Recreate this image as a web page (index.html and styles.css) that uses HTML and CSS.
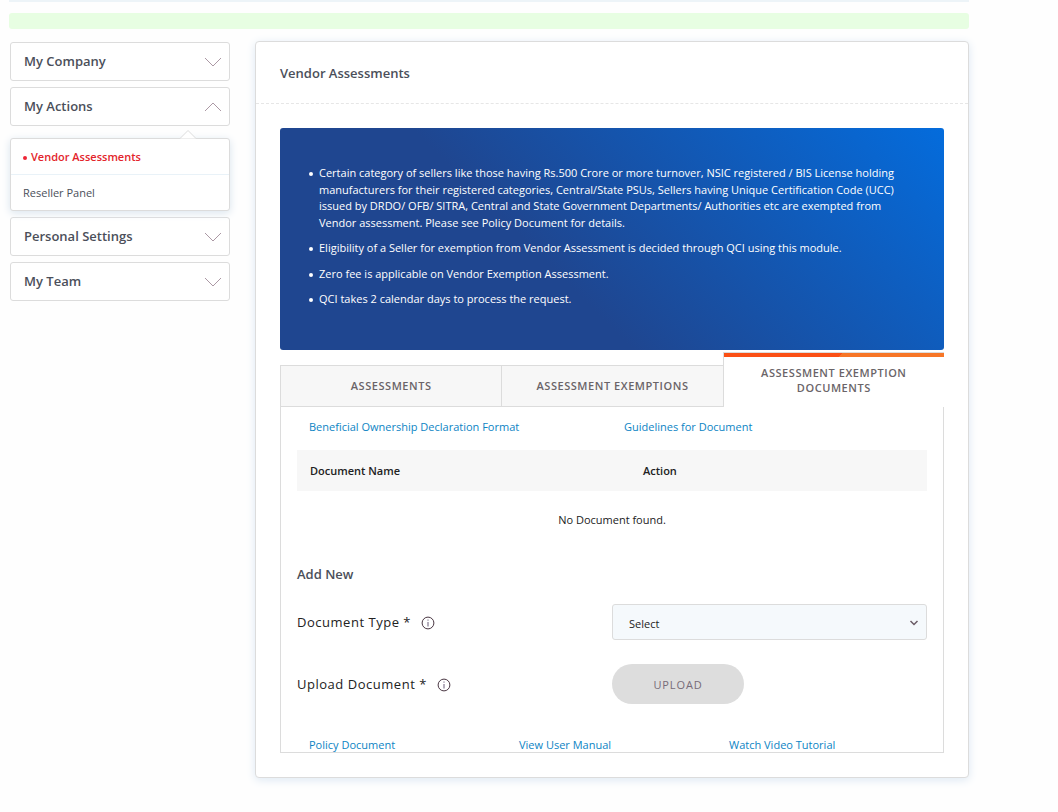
FILE: index.html
```html
<!DOCTYPE html>
<html lang="en">
<head>
<meta charset="utf-8">
<title>Vendor Assessments</title>
<link rel="stylesheet" href="styles.css">
</head>
<body>
<div class="page">
  <div class="notice" role="status"></div>
  <div class="columns">
    <nav class="sidebar" aria-label="Account">
      <button class="menu-toggle" type="button" aria-expanded="false">My Company
        <svg class="chevron" viewBox="0 0 18 10" aria-hidden="true"><path d="M1 1l8 8 8-8"/></svg>
      </button>
      <button class="menu-toggle" type="button" aria-expanded="true">My Actions
        <svg class="chevron" viewBox="0 0 18 10" aria-hidden="true"><path d="M1 9l8-8 8 8"/></svg>
      </button>
      <div class="submenu">
        <svg class="submenu-tip" viewBox="0 0 18 10" aria-hidden="true"><path d="M1 9.500l8-8 8 8"/></svg>
        <a class="submenu-link current" href="#vendor" aria-current="page">Vendor Assessments</a>
        <a class="submenu-link" href="#reseller">Reseller Panel</a>
      </div>
      <button class="menu-toggle" type="button" aria-expanded="false">Personal Settings
        <svg class="chevron" viewBox="0 0 18 10" aria-hidden="true"><path d="M1 1l8 8 8-8"/></svg>
      </button>
      <button class="menu-toggle" type="button" aria-expanded="false">My Team
        <svg class="chevron" viewBox="0 0 18 10" aria-hidden="true"><path d="M1 1l8 8 8-8"/></svg>
      </button>
    </nav>
    <main class="card">
      <h1 class="card-title">Vendor Assessments</h1>
      <div class="card-body">
        <ul class="banner">
          <li>Certain category of sellers like those having Rs.500 Crore or more turnover, NSIC registered / BIS License holding manufacturers for their registered categories, Central/State PSUs, Sellers having Unique Certification Code (UCC) issued by DRDO/ OFB/ SITRA, Central and State Government Departments/ Authorities etc are exempted from Vendor assessment. Please see Policy Document for details.</li>
          <li>Eligibility of a Seller for exemption from Vendor Assessment is decided through QCI using this module.</li>
          <li>Zero fee is applicable on Vendor Exemption Assessment.</li>
          <li>QCI takes 2 calendar days to process the request.</li>
        </ul>
        <div class="tabs" role="tablist">
          <button class="tab" type="button" role="tab" aria-selected="false">Assessments</button>
          <button class="tab" type="button" role="tab" aria-selected="false">Assessment Exemptions</button>
          <button class="tab active" type="button" role="tab" aria-selected="true">Assessment Exemption Documents</button>
        </div>
        <section class="panel" role="tabpanel">
          <div class="links two">
            <a href="#format">Beneficial Ownership Declaration Format</a>
            <a href="#guidelines">Guidelines for Document</a>
          </div>
          <table class="documents">
            <thead><tr><th>Document Name</th><th>Action</th></tr></thead>
            <tbody><tr><td colspan="2">No Document found.</td></tr></tbody>
          </table>
          <h2 class="form-title">Add New</h2>
          <form class="form">
            <div class="label-cell">
              <label for="doc-type">Document Type *</label>
              <svg class="info" viewBox="0 0 14 14" aria-hidden="true"><circle cx="7" cy="7" r="5.900"/><path class="info-mark" d="M7 6v4.500M7 3.500v1.200"/></svg>
            </div>
            <div class="field"><select class="select" id="doc-type"><option>Select</option></select>
              <svg class="select-arrow" viewBox="0 0 10 6" aria-hidden="true"><path d="M1.500 1l3.500 3.500L8.500 1"/></svg>
            </div>
            <div class="label-cell">
              <span id="upload-label">Upload Document *</span>
              <svg class="info" viewBox="0 0 14 14" aria-hidden="true"><circle cx="7" cy="7" r="5.900"/><path class="info-mark" d="M7 6v4.500M7 3.500v1.200"/></svg>
            </div>
            <div class="field"><button class="upload" type="button" aria-describedby="upload-label">Upload</button></div>
          </form>
          <div class="links three">
            <a href="#policy">Policy Document</a>
            <a href="#manual">View User Manual</a>
            <a href="#video">Watch Video Tutorial</a>
          </div>
        </section>
      </div>
    </main>
  </div>
</div>
</body>
</html>
```
FILE: styles.css
```css
* { box-sizing: border-box; }
body {
  margin: 0;
  font: 11px/1.5 "Open Sans", "Noto Sans", sans-serif;
  color: #222;
  background: #fefefe;
}
button, select { font: inherit; }
a { color: #0c84c4; text-decoration: none; }

.page {
  margin: 0 89px 0 9px;
  padding-bottom: 34px;
  border-top: 2px solid #edf4f8;
}
.notice {
  height: 16px;
  margin-top: 11px;
  border-radius: 3px;
  background: #e7fee2;
}
.columns {
  display: grid;
  grid-template-columns: 220px 1fr;
  gap: 25px;
  align-items: start;
  padding: 12px 0 0 1px;
}

.sidebar {
  display: flex;
  flex-direction: column;
  gap: 6px;
  padding-top: 1px;
}
.menu-toggle {
  display: flex;
  align-items: center;
  justify-content: space-between;
  height: 39px;
  padding: 0 7px 0 13px;
  border: 1px solid #dcdcdc;
  border-radius: 3px;
  background: #fff;
  color: #4b4f5a;
  font-size: 13px;
  font-weight: 600;
}
.chevron {
  width: 18px;
  height: 10px;
  fill: none;
  stroke: #ab98a4;
}
.submenu {
  position: relative;
  margin-top: 6px;
  border: 1px solid #dcdcdc;
  border-radius: 3px;
  background: #fff;
  box-shadow: 0 2px 8px #d9e4ee;
}
.submenu-tip {
  position: absolute;
  top: -10px;
  right: 32px;
  width: 18px;
  height: 10px;
  fill: #fff;
  stroke: #dcdcdc;
}
.submenu-link {
  display: flex;
  align-items: center;
  height: 35px;
  padding: 2px 12px 0;
  color: #4b4f5a;
}
.submenu-link + .submenu-link { height: 36px; border-top: 1px solid #e9f2f8; }
.submenu-link.current { color: #e3242b; font-weight: 600; }
.submenu-link.current::before {
  content: "";
  width: 4px;
  height: 4px;
  margin-right: 4px;
  border-radius: 50%;
  background: #ee2536;
}

.card {
  border: 1px solid #dcdcdc;
  border-radius: 4px;
  background: #fff;
  box-shadow: 0 2px 10px #dde8f3;
}
.card-title {
  margin: 0;
  padding: 21px 24px 20px;
  font-size: 13px;
  line-height: 20px;
  font-weight: 600;
  color: #4b4f5a;
  border-bottom: 1px dashed #e6e6e6;
}
.card-body { padding: 24px; }
.banner {
  display: flex;
  flex-direction: column;
  gap: 9px;
  min-height: 222px;
  margin: 0;
  padding: 37px 38px 37px 39px;
  border-radius: 3px;
  color: #fff;
  background: linear-gradient(45deg, #1f4690 40%, #046cdc);
}
.banner li { list-style: none; position: relative; }
.banner li::before {
  content: "";
  position: absolute;
  top: 7px;
  left: -10px;
  width: 4px;
  height: 4px;
  border-radius: 50%;
  background: #fff;
}

.tabs {
  display: grid;
  grid-template-columns: repeat(3, 1fr);
  align-items: end;
  margin-top: 2px;
}
.tab {
  height: 42px;
  padding: 0 24px 1px;
  border: 1px solid #dcdcdc;
  border-right-width: 0;
  background: #f7f7f7;
  color: #6a6468;
  font-weight: 600;
  line-height: 15px;
  letter-spacing: 0.05em;
  text-transform: uppercase;
}
.tab.active {
  position: relative;
  height: 55px;
  border-bottom: 0;
  background: #fff;
}
.tab.active::before {
  content: "";
  position: absolute;
  top: 0;
  left: 0;
  right: 0;
  height: 4px;
  background: linear-gradient(135deg, #fb5015 53%, #f77627 53%);
}
.panel {
  padding: 12px 16px 0;
  border: 1px solid #dcdcdc;
  border-top: 0;
}
.links { display: grid; line-height: 16px; }
.links a { padding: 0 12px; }
.links.two { grid-template-columns: 1fr 1fr; }
.links.three { grid-template-columns: repeat(3, 1fr); }
.documents {
  width: 100%;
  margin-top: 15px;
  border-collapse: collapse;
  table-layout: fixed;
}
.documents th {
  height: 41px;
  padding: 2px 13px 0;
  background: #f7f7f7;
  font-weight: 600;
  text-align: left;
}
.documents th + th { padding-left: 31px; }
.documents td { height: 58px; padding: 0; text-align: center; }
.form-title {
  margin: 15px 0 0;
  font-size: 13px;
  line-height: 20px;
  font-weight: 600;
  color: #4b4f5a;
}
.form {
  display: grid;
  grid-template-columns: 1fr 1fr;
  row-gap: 24px;
  align-items: center;
  margin-top: 20px;
}
.label-cell {
  display: flex;
  align-items: center;
  gap: 10px;
  padding-top: 2px;
  font-size: 13px;
  letter-spacing: 0.04em;
}
.info {
  width: 14px;
  height: 14px;
  fill: none;
  stroke: #4b3844;
}
.info-mark { stroke: #6b5c78; }
.field { position: relative; }
.select {
  display: block;
  width: 100%;
  height: 36px;
  padding: 4px 16px 0;
  border: 1px solid #dcdcdc;
  border-radius: 3px;
  appearance: none;
  background: #f5f9fc;
  color: #222;
}
.select-arrow {
  position: absolute;
  top: 16px;
  right: 8px;
  width: 10px;
  height: 6px;
  fill: none;
  stroke: #6b5c66;
  stroke-width: 1.500;
  pointer-events: none;
}
.upload {
  display: block;
  width: 132px;
  height: 40px;
  padding: 2px 0 0;
  border: 0;
  border-radius: 20px;
  background: #ddd;
  color: #776b78;
  letter-spacing: 0.08em;
  text-transform: uppercase;
}
.links.three { margin-top: 33px; line-height: 15px; }
```
